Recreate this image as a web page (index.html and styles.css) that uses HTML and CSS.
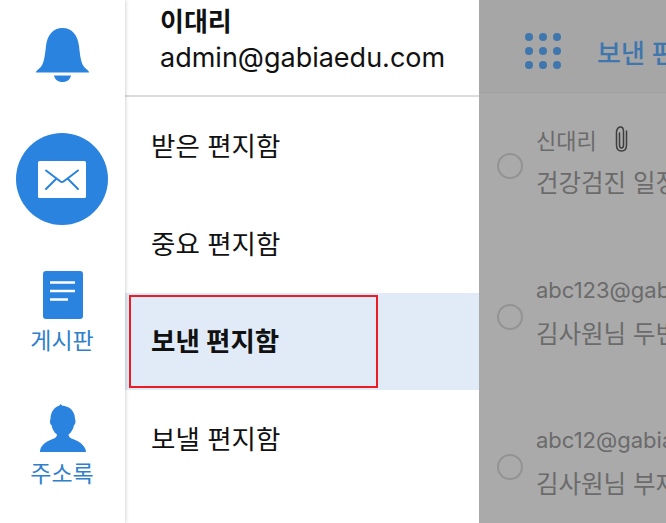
FILE: index.html
```html
<!DOCTYPE html>
<html lang="ko">
<head>
<meta charset="UTF-8" />
<meta name="viewport" content="width=device-width, initial-scale=1" />
<title>보낸 편지함</title>
<link rel="stylesheet" href="styles.css">
</head>
<body>
  <div class="screen">
    <nav class="rail">
      <svg class="bell" viewBox="0 0 53 54" aria-hidden="true">
        <path d="M0 44.500c0-2.200 3-3 5.500-6.500C8.500 33.500 9 26 10 18 11.300 7 17 0 26.500 0S41.700 7 43 18c1 8 1.500 15.500 4.500 20 2.500 3.500 5.500 4.300 5.500 6.500z"/>
        <path d="M18 47.500h17c-.5 3.800-4 6.500-8.500 6.500S18.500 51.300 18 47.500z"/>
      </svg>
      <div class="mail-btn">
        <svg class="mail" viewBox="0 0 48 37" aria-hidden="true">
          <rect width="48" height="37" rx="1.500" fill="#fff"/>
          <path d="M8 9.500l14.500 11q1.500 1 3 0L40 9.500M8 28l9.500-9.500M40 28l-9.500-9.500" fill="none" stroke="#2a83de" stroke-width="2" stroke-linecap="round" stroke-linejoin="round"/>
        </svg>
      </div>
      <a class="rail-link board">
        <svg class="doc" viewBox="0 0 40 48" aria-hidden="true">
          <rect width="40" height="48" rx="3"/>
          <path d="M7 11.500h25M7 20h25M7 28.500h18" fill="none" stroke="#fff" stroke-width="2.500"/>
        </svg>
        <span>게시판</span>
      </a>
      <a class="rail-link contacts">
        <svg class="person" viewBox="0 0 46 48" aria-hidden="true">
          <path d="M0 48c0-2 .5-4 2-6 3-4 8-6 12-7.500 2-1 3-2.500 3-4-3-2-5-6-5.500-9.500-1.500-.5-2-4-1-6 0-7 4-12 9-13.500l1-1.500 1.500 1.500c7 .5 13 5 13 13.500 1 2 .5 5.500-1 6-.5 3.500-2.500 7.500-5.500 9.500 0 1.500 1 3 3 4 4 1.500 9 3.500 12 7.500 1.500 2 2.500 4 2.500 6z"/>
        </svg>
        <span>주소록</span>
      </a>
    </nav>

    <aside class="drawer">
      <header class="account">
        <strong>이대리</strong>
        <span>admin@gabiaedu.com</span>
      </header>
      <ul class="folders">
        <li>받은 편지함</li>
        <li>중요 편지함</li>
        <li class="active">보낸 편지함<i class="callout"></i></li>
        <li>보낼 편지함</li>
      </ul>
    </aside>

    <section class="list">
      <header class="list-head">
        <div class="dots"><i></i><i></i><i></i><i></i><i></i><i></i><i></i><i></i><i></i></div>
        <h2>보낸 편지함</h2>
      </header>
      <div class="msg">
        <span class="radio"></span>
        <div class="msg-text">
          <p class="from">신대리
            <svg class="clip" viewBox="0 0 15 26" aria-hidden="true">
              <path d="M5.500 7v12q0 3 2 3t2-3V5.500Q9.500 1 6.500 1T2.500 5.500V19q0 6 5 6t5-6V5" fill="none" stroke="#3e3e3e" stroke-width="1.500" stroke-linecap="round"/>
            </svg>
          </p>
          <p class="subject">건강검진 일정 안내입니다</p>
        </div>
      </div>
      <div class="msg">
        <span class="radio"></span>
        <div class="msg-text">
          <p class="from">abc123@gabiaedu.com</p>
          <p class="subject">김사원님 두번째 메일입니다</p>
        </div>
      </div>
      <div class="msg">
        <span class="radio"></span>
        <div class="msg-text">
          <p class="from">abc12@gabiaedu.com</p>
          <p class="subject">김사원님 부재중 메일입니다</p>
        </div>
      </div>
    </section>
  </div>
</body>
</html>
```

FILE: styles.css
```css
:root {
  --blue: #2a83de;
  --font: 'Inter', 'Noto Sans CJK KR', sans-serif;
}
*, *::before, *::after {
  box-sizing: border-box;
}
html, body {
  margin: 0;
  height: 100%;
  overflow: hidden;
}
body {
  font-family: var(--font);
  color: #111;
}
.screen {
  display: grid;
  grid-template-columns: 125px 354px 187px;
  height: 523px;
  overflow: hidden;
}

/* left rail */
.rail {
  position: relative;
  z-index: 1;
  display: flex;
  flex-direction: column;
  align-items: center;
  padding-top: 28px;
  background: #fff;
  box-shadow: 0 0 4px rgba(0,0,0,0.25);
}
.bell {
  display: block;
  width: 53px;
  height: 54px;
  fill: var(--blue);
}
.mail-btn {
  display: flex;
  justify-content: center;
  align-items: center;
  width: 92px;
  height: 92px;
  margin: 51px 1px 0 0;
  border-radius: 50%;
  background: var(--blue);
}
.mail {
  width: 48px;
  height: 37px;
}
.rail-link {
  display: flex;
  flex-direction: column;
  align-items: center;
  gap: 8px;
  margin-right: 1px;
  color: #2f7fcb;
  font-size: 23px;
  line-height: 28px;
}
.rail-link svg {
  display: block;
  margin-left: 2px;
  fill: var(--blue);
}
.board {
  margin-top: 46px;
}
.doc {
  width: 40px;
  height: 48px;
}
.contacts {
  margin-top: 49px;
}
.person {
  width: 46px;
  height: 48px;
}

/* drawer */
.drawer {
  background: #fff;
}
.account {
  display: flex;
  flex-direction: column;
  height: 97px;
  padding: 4px 0 0 35px;
  border-bottom: 2px solid #dcdcdc;
}
.account strong {
  font-size: 26px;
  line-height: 36px;
}
.account span {
  font-size: 27px;
  line-height: 36px;
}
.folders {
  margin: 0;
  padding: 0;
  list-style: none;
}
.folders li {
  position: relative;
  display: flex;
  align-items: center;
  height: 98px;
  padding: 0 0 4px 26px;
  font-size: 26.500px;
}
.folders li:nth-child(3) {
  height: 97px;
}
.folders .active {
  background: #e0ebf7;
  font-weight: 700;
}
.callout {
  position: absolute;
  left: 4px;
  top: 2px;
  width: 249px;
  height: 93px;
  border: 2px solid #ed1c24;
}

/* dimmed message list */
.list {
  background: #aaa;
  color: #6b6b6b;
  overflow: hidden;
}
.list-head {
  display: flex;
  align-items: center;
  height: 92px;
  padding: 14px 0 4px 46px;
  gap: 36px;
  background: #a6a6a6;
  box-shadow: 0 1px 1px #a2a2a2;
  white-space: nowrap;
}
.dots {
  display: grid;
  flex: none;
  grid-template-columns: repeat(3, 8px);
  gap: 6px;
}
.dots i {
  width: 8px;
  height: 8px;
  border-radius: 50%;
  background: #3f76ae;
}
.list-head h2 {
  margin: 0;
  color: #3f76ae;
  font-size: 26px;
  font-weight: 500;
}
.msg {
  display: flex;
  align-items: center;
  height: 150.500px;
  padding-left: 18px;
  gap: 13px;
  white-space: nowrap;
}
.radio {
  flex: none;
  width: 26px;
  height: 26px;
  margin-top: -2px;
  border: 2px solid #939393;
  border-radius: 50%;
}
.msg-text {
  margin-top: -12px;
}
.msg p {
  margin: 0;
}
.from {
  display: flex;
  align-items: center;
  gap: 17px;
  height: 36px;
  font-size: 22px;
}
.clip {
  width: 15px;
  height: 26px;
}
.msg .subject {
  margin-top: 8px;
  font-size: 24.500px;
  line-height: 36px;
}
```
